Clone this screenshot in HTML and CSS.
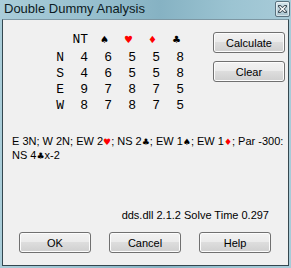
FILE: index.html
```html
<!DOCTYPE html>
<html>
<head>
<meta charset="utf-8">
<link rel="stylesheet" href="styles.css">
</head>
<body>
<div class="window">
  <div class="titlebar">
    <span class="title">Double Dummy Analysis</span>
    <div class="close">
      <svg width="9" height="8" viewBox="0 0 9 8">
        <path d="M1.5 1.2 L7.5 6.8 M7.5 1.2 L1.5 6.8" stroke="#3d4c56" stroke-width="3" stroke-linecap="square"/>
        <path d="M1.5 1.2 L7.5 6.8 M7.5 1.2 L1.5 6.8" stroke="#ffffff" stroke-width="1.4"/>
      </svg>
    </div>
  </div>
  <div class="client">
    <div class="top">
      <div class="grid">
        <span></span><span>NT</span><span class="suit">♠</span><span class="suit red">♥</span><span class="suit red">♦</span><span class="suit">♣</span>
        <span>N</span><span>4</span><span>6</span><span>5</span><span>5</span><span>8</span>
        <span>S</span><span>4</span><span>6</span><span>5</span><span>5</span><span>8</span>
        <span>E</span><span>9</span><span>7</span><span>8</span><span>7</span><span>5</span>
        <span>W</span><span>8</span><span>7</span><span>8</span><span>7</span><span>5</span>
      </div>
      <div class="side">
        <button class="btn">Calculate</button>
        <button class="btn">Clear</button>
      </div>
    </div>
    <p class="par">E 3N; W 2N; EW 2<span class="s red">♥</span>; NS 2<span class="s">♣</span>; EW 1<span class="s">♠</span>; EW 1<span class="s red">♦</span>; Par -300:<br>NS 4<span class="s">♣</span>x-2</p>
    <p class="version">dds.dll 2.1.2 Solve Time 0.297</p>
    <div class="actions">
      <button class="btn">OK</button>
      <button class="btn">Cancel</button>
      <button class="btn">Help</button>
    </div>
  </div>
</div>
</body>
</html>
```
FILE: styles.css
```css
html, body {
  margin: 0;
  padding: 0;
}
body {
  width: 291px;
  height: 268px;
  overflow: hidden;
  font-family: "Liberation Sans", Arial, sans-serif;
}
.window {
  width: 291px;
  height: 268px;
  box-sizing: border-box;
  padding: 0 2px 2px 2px;
  display: flex;
  flex-direction: column;
  background: linear-gradient(90deg, #aacdd9 0%, #98c0cf 30%, #86b2c3 55%, #9cc4d2 80%, #a8cbd8 100%);
}
.titlebar {
  height: 19px;
  display: flex;
  align-items: flex-start;
}
.title {
  margin-left: 2px;
  margin-top: 1px;
  font-size: 13px;
  line-height: 15px;
  color: #0c1a22;
  font-family: "Liberation Sans", Arial, sans-serif;
  flex: 1;
}
.close {
  width: 13px;
  height: 14px;
  margin-top: 1px;
  margin-right: -1px;
  border: 1px solid #5a717e;
  border-radius: 2px;
  background: linear-gradient(#d6e6ec, #a9c4cf);
  display: flex;
  align-items: center;
  justify-content: center;
  box-shadow: inset 0 0 0 1px rgba(255,255,255,0.5);
}
.client {
  flex: 1;
  background: #f0f0f0;
  border: 1px solid #34474f;
  border-top-color: #7d97a3;
  display: flex;
  flex-direction: column;
  padding-top: 12px;
}
.top {
  display: flex;
  align-items: flex-start;
}
.grid {
  margin-left: 37px;
  display: grid;
  grid-template-columns: repeat(6, 24px);
  grid-template-rows: 18px 16px 16px 16px 16px;
  font-family: "Liberation Mono", "Courier New", monospace;
  font-size: 13px;
  line-height: 16px;
  color: #000;
  text-align: right;
}
.grid span {
  display: block;
}
.grid .suit {
  font-family: "DejaVu Sans", sans-serif;
  font-size: 10px;
  padding-right: 3px;
}
.red {
  color: #ff0000;
}
.side {
  margin-left: auto;
  margin-right: 3px;
  display: flex;
  flex-direction: column;
  gap: 8px;
}
.btn {
  width: 72px;
  height: 21px;
  box-sizing: border-box;
  border: 1px solid #707070;
  border-radius: 3px;
  background: linear-gradient(#f2f2f2 0%, #ebebeb 45%, #dddddd 50%, #cfcfcf 100%);
  box-shadow: inset 0 0 0 1px #fcfcfc;
  font-family: "Liberation Sans", Arial, sans-serif;
  font-size: 11px;
  color: #000;
  padding: 0;
  margin: 0;
}
.par {
  margin: 21px 0 0 9px;
  font-size: 11px;
  line-height: 13px;
  color: #000;
}
.s {
  font-family: "DejaVu Sans", sans-serif;
  font-size: 9px;
}
.version {
  margin: 46px 19px 0 0;
  text-align: right;
  font-size: 11px;
  line-height: 13px;
  color: #000;
}
.actions {
  margin: 10px 0 0 16px;
  display: flex;
  gap: 18px;
}
```
